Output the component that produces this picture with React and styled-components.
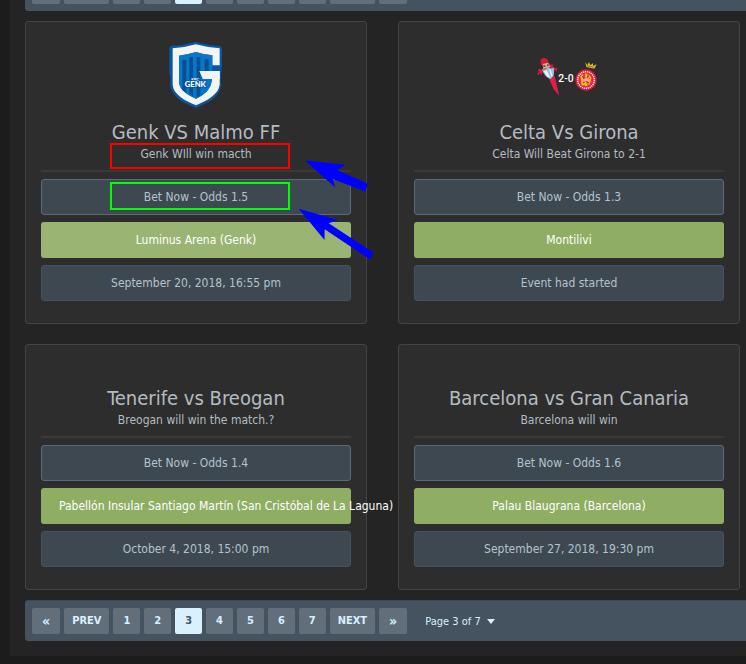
import React, { useState } from "react";
import styled, { createGlobalStyle } from "styled-components";

const GlobalStyle = createGlobalStyle`
  * {
    box-sizing: border-box;
  }

  body {
    margin: 0;
    background: #1c1c1c;
    color: #b4bcc2;
    font-family: Tahoma, "DejaVu Sans Condensed", "DejaVu Sans", sans-serif;
    font-size: 12px;
    overflow: hidden;
  }

  button,
  select {
    font-family: inherit;
    cursor: pointer;
  }
`;

// the list is scrolled down a bit, so the first pager is mostly out of view
const Page = styled.main`
  margin-left: 10px;
  margin-top: -30px;
  padding: 0 0 15px 15px;
  background: #242424;
`;

const PagerBar = styled.nav`
  display: flex;
  align-items: center;
  gap: 4px;
  height: 41px;
  padding: 0 7px;
  background: #45525f;
  border-top: 1px solid #3c4854;
  border-radius: 3px 0 0 3px;
`;

const PageButton = styled.button`
  height: 26px;
  padding: 0 ${(props) => (props.$word ? "8px" : "10px")};
  border: 0;
  border-radius: 2px;
  background: ${(props) => (props.$active ? "#d9f0ff" : "#626f7b")};
  color: ${(props) => (props.$active ? "#45525f" : "#d9f0ff")};
  font-size: ${(props) => (props.$arrow ? "14px" : "11px")};
  font-weight: bold;
  line-height: 26px;
`;

const PageSelect = styled.label`
  display: flex;
  align-items: center;
  gap: 6px;
  margin-left: 14px;
  color: #d9f0ff;
`;

const Select = styled.select`
  appearance: none;
  padding: 0;
  border: 0;
  background: transparent;
  color: inherit;
  font-size: 11px;
`;

const Grid = styled.div`
  display: grid;
  grid-template-columns: 1fr 1fr;
  gap: 20px 31px;
  padding: 10px 6px 10px 0;
`;

const Card = styled.article`
  position: relative;
  min-width: 0;
  padding: 20px 15px 22px;
  background: #2d2d2d;
  border: 1px solid #444444;
  border-radius: 3px;
  text-align: center;
`;

const Media = styled.div`
  display: flex;
  justify-content: center;
  height: ${(props) => (props.$empty ? "21px" : "78px")};
`;

const Title = styled.h2`
  margin: 0;
  font-size: 20px;
  font-weight: normal;
  line-height: 24px;
  white-space: nowrap;
`;

const Tip = styled.p`
  margin: 0;
  line-height: 20px;
`;

const Divider = styled.hr`
  height: 2px;
  margin: 6px 0 7px;
  border: 0;
  background: #393939;
`;

const Actions = styled.div`
  display: flex;
  flex-direction: column;
  gap: 7px;
`;

const BetButton = styled.button`
  height: 36px;
  padding: 0 17px;
  border: 1px solid #5b6a79;
  border-radius: 3px;
  background: #3e4851;
  color: #b4c3cd;
  font-size: 12px;
`;

const Venue = styled.a`
  height: 36px;
  padding: 0 18px;
  border-radius: 3px;
  background: ${(props) => (props.$hover ? "#9ab573" : "#8fae64")};
  color: #ffffff;
  line-height: 36px;
  text-decoration: none;
  white-space: nowrap;
`;

const EventDate = styled.div`
  height: 36px;
  border: 1px solid #45525f;
  border-radius: 3px;
  background: #3e4851;
  color: #b4c3cd;
  line-height: 34px;
`;

// marker frames drawn over the card
const Mark = styled.span`
  position: absolute;
  left: 84px;
  top: ${(props) => props.$top}px;
  width: 180px;
  height: ${(props) => props.$height}px;
  border: 2px solid ${(props) => props.$color};
  pointer-events: none;
`;

const Arrows = styled.svg`
  position: absolute;
  left: 272px;
  top: 136px;
  z-index: 1;
  pointer-events: none;
`;

const GenkLogo = () => (
  <svg width="56" height="66" viewBox="54 35 168 198" role="img" aria-label="Genk">
    <path
      d="M137 35 Q174 45 208 47 Q216 49 216 58 V105 L213 132 V168 Q208 194 180 213 L138 233 L97 214 Q69 196 61 169 V139 L58 127 V55 Q59 47 68 46 Q101 45 137 35Z"
      fill="#0757a2"
    />
    <path
      d="M137 42 Q170 51 209 54 V105 H187 V75 Q160 73 138 65 Q113 73 87 76 V154 C88 180 114 193 138 205 C162 193 184 178 186 145 H159 L148 122 H209 V163 C206 192 170 211 138 225 C105 211 70 192 68 163 V54 Q105 52 137 42Z"
      fill="#f3f4f6"
    />
    <path
      d="M138 65 Q161 73 187 75 V122 H148 L159 145 H186 C184 178 162 193 138 205 C114 193 88 180 87 154 V76 Q113 73 138 65Z"
      fill="#0877c6"
    />
    <path d="M97 88h12v100l-12-10zM118 80h11v118l-11-7zM140 80h11v115l-11 6zM164 87h12v35h-12z" fill="#064f94" />
    <path d="M148 122 H209 V146 H159Z" fill="#f3f4f6" />
    <text x="136" y="151" textAnchor="middle" fontFamily="Liberation Sans" fontSize="11" fontWeight="bold" fill="#ffffff">
      KRC
    </text>
    <text x="136" y="171" textAnchor="middle" fontFamily="Lato" fontSize="23" fontWeight="900" fill="#ffffff" stroke="#06569f" strokeWidth="4" paintOrder="stroke">
      GENK
    </text>
  </svg>
);

const CeltaGironaLogo = () => (
  <svg width="66" height="66" viewBox="48 -10 198 198" role="img" aria-label="Celta 2-0 Girona">
    <path d="M86 97 L104 92 L110 119 L118 151 L101 132Z" fill="#e51b48" />
    <path
      d="M62 42 L72 37 L82 41 L86 53 L96 59 L101 55 L98 66 L108 69 L111 65 V79 L105 74 L97 75 L99 84 L91 77 L67 82 L65 88 L58 84 L56 90 L51 84 L58 80 L52 74 L60 70 L66 74 L70 66 L62 55Z"
      fill="#d9173d"
    />
    <path d="M68 56 L84 52 L91 65 L70 71Z" fill="#c9b783" />
    <path d="M70 60h6v5h-6zM81 57h5v5h-5z" fill="#594d3e" />
    <path d="M66 72 Q77 76 84 66 Q93 73 101 66 Q107 94 91 101 Q74 96 66 72Z" fill="#8fc5ea" />
    <path d="M71 78 L80 75 L91 97 L82 94ZM87 70 L92 73 L98 91 L94 94Z" fill="#ebf4fa" />
    <text x="138" y="109" textAnchor="middle" fontFamily="Roboto, Liberation Sans" fontSize="31" fontWeight="500" fill="#ffffff">
      2-0
    </text>
    <path d="M196 50 L202 60 L207 51 L212 60 L219 53 L219 62 L230 57 L223 70 L199 65Z" fill="#e3c313" />
    <path d="M201 61 L221 66" stroke="#5c4a18" strokeWidth="2" />
    <circle cx="198" cy="104" r="32" fill="#dc1737" />
    <circle cx="198" cy="104" r="25" fill="none" stroke="#f4d6da" strokeWidth="5" strokeDasharray="4 2" />
    <circle cx="198" cy="104" r="20" fill="#e9354b" />
    <path d="M181 92l7-7 5 34-8 2zM195 84l7 2 2 15-8-2zM206 87l8 10-5 22-7-3zM190 112l8-3 5 12-7 2z" fill="#efbd21" />
    <path d="M187 93l9 12M205 91l-6 13M189 113l20-14M194 105l14 9" stroke="#a5172b" strokeWidth="3" />
    <path d="M190 100l16-3 1 10-16 3z" fill="#f0a2ab" />
  </svg>
);

const logos = {
  genk: <GenkLogo />,
  celta: <CeltaGironaLogo />,
};

const events = [
  {
    logo: "genk",
    title: "Genk VS Malmo FF",
    tip: "Genk WIll win macth",
    odds: "1.5",
    venue: "Luminus Arena (Genk)",
    date: "September 20, 2018, 16:55 pm",
    marked: true,
  },
  {
    logo: "celta",
    title: "Celta Vs Girona",
    tip: "Celta Will Beat Girona to 2-1",
    odds: "1.3",
    venue: "Montilivi",
    date: "Event had started",
  },
  {
    title: "Tenerife vs Breogan",
    tip: "Breogan will win the match.?",
    odds: "1.4",
    venue: "Pabellón Insular Santiago Martín (San Cristóbal de La Laguna)",
    date: "October 4, 2018, 15:00 pm",
  },
  {
    title: "Barcelona vs Gran Canaria",
    tip: "Barcelona will win",
    odds: "1.6",
    venue: "Palau Blaugrana (Barcelona)",
    date: "September 27, 2018, 19:30 pm",
  },
];

const pages = [1, 2, 3, 4, 5, 6, 7];

const Pager = ({ page, setPage }) => {
  // keeps the page inside the list
  const goTo = (n) => {
    setPage(Math.min(Math.max(n, 1), pages.length));
  };

  return (
    <PagerBar>
      <PageButton $arrow aria-label="First page" onClick={() => goTo(1)}>«</PageButton>
      <PageButton $word onClick={() => goTo(page - 1)}>PREV</PageButton>
      {pages.map((n) => (
        <PageButton key={n} $active={n === page} onClick={() => goTo(n)}>
          {n}
        </PageButton>
      ))}
      <PageButton $word onClick={() => goTo(page + 1)}>NEXT</PageButton>
      <PageButton $arrow aria-label="Last page" onClick={() => goTo(pages.length)}>»</PageButton>
      <PageSelect>
        <Select
          aria-label="Page"
          value={page}
          onChange={(e) => goTo(Number(e.target.value))}
        >
          {pages.map((n) => (
            <option key={n} value={n}>
              Page {n} of {pages.length}
            </option>
          ))}
        </Select>
        <svg width="8" height="5" viewBox="0 0 8 5" aria-hidden="true">
          <path d="M0 0h8L4 5z" fill="#d9f0ff" />
        </svg>
      </PageSelect>
    </PagerBar>
  );
};

const EventCard = ({ event }) => (
  <Card>
    <Media $empty={!event.logo}>{logos[event.logo]}</Media>
    <Title>{event.title}</Title>
    <Tip>{event.tip}</Tip>
    <Divider />
    <Actions>
      <BetButton type="button">Bet Now - Odds {event.odds}</BetButton>
      <Venue href="#venue" $hover={event.marked}>
        {event.venue}
      </Venue>
      <EventDate>{event.date}</EventDate>
    </Actions>
    {event.marked && (
      <>
        <Mark $top={121} $height={26} $color="#ff0000" />
        <Mark $top={160} $height={28} $color="#00ff00" />
        <Arrows width="80" height="104" viewBox="298 158 80 104" aria-hidden="true">
          <path d="M305 160.5 L345.5 164.7 L337 170 L368 183.7 L365.3 191.5 L332.7 179 L335.3 187.5Z" fill="#0000ff" />
          <path d="M298.7 208.7 L338 220 L328.7 223.3 L373.5 252.7 L370 259.5 L324.7 229.3 L324.5 240Z" fill="#0000ff" />
        </Arrows>
      </>
    )}
  </Card>
);

const App = () => {
  const [page, setPage] = useState(3);

  return (
    <>
      <GlobalStyle />
      <Page>
        <Pager page={page} setPage={setPage} />
        <Grid>
          {events.map((event) => (
            <EventCard key={event.title} event={event} />
          ))}
        </Grid>
        <Pager page={page} setPage={setPage} />
      </Page>
    </>
  );
};

export default App;
